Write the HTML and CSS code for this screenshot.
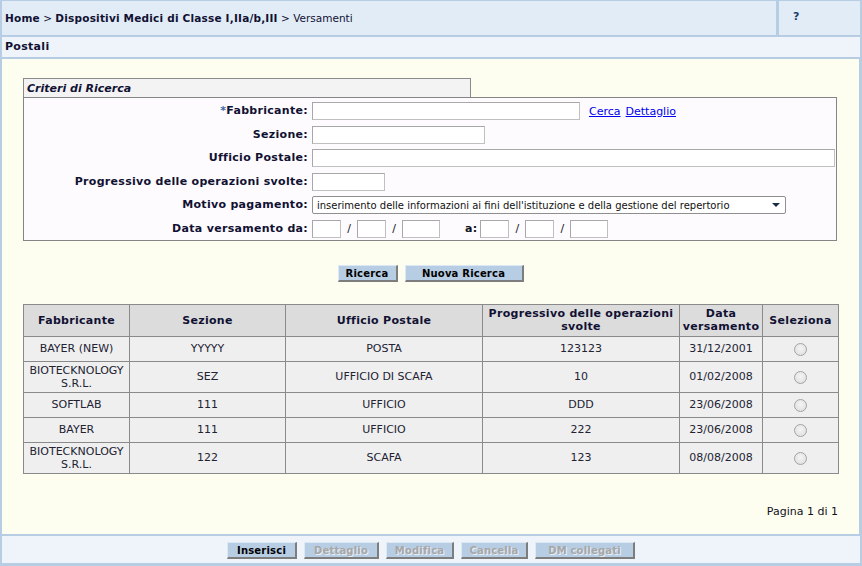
FILE: index.html
```html
<!DOCTYPE html>
<html lang="it">
<head>
<meta charset="utf-8">
<title>Versamenti Postali</title>
<link rel="stylesheet" href="styles.css">
</head>
<body>
<div class="page">
  <div class="topbar">
    <div class="crumbs"><b>Home</b> &gt; <b>Dispositivi Medici di Classe I,IIa/b,III</b> &gt; Versamenti</div>
    <div class="help">?</div>
  </div>
  <div class="titlebar">Postali</div>
  <div class="content">
    <div class="criteria">
      <div class="criteria-tab">Criteri di Ricerca</div>
      <div class="criteria-box">
        <div class="form">
          <label class="lbl"><span class="req">*</span>Fabbricante:</label>
          <div class="field"><span class="inp w-fab"></span><a href="#" class="lnk">Cerca</a><a href="#" class="lnk">Dettaglio</a></div>

          <label class="lbl">Sezione:</label>
          <div class="field"><span class="inp w-sez"></span></div>

          <label class="lbl">Ufficio Postale:</label>
          <div class="field"><span class="inp w-uff"></span></div>

          <label class="lbl">Progressivo delle operazioni svolte:</label>
          <div class="field"><span class="inp w-prog"></span></div>

          <label class="lbl">Motivo pagamento:</label>
          <div class="field"><div class="select"><span class="sel-text">inserimento delle informazioni ai fini dell'istituzione e della gestione del repertorio</span><span class="sel-arrow"></span></div></div>

          <label class="lbl">Data versamento da:</label>
          <div class="field">
            <span class="inp w-dd"></span><span class="slash">/</span><span class="inp w-mm"></span><span class="slash">/</span><span class="inp w-yy"></span>
            <span class="lbl-a">a:</span>
            <span class="inp w-dd"></span><span class="slash">/</span><span class="inp w-mm"></span><span class="slash">/</span><span class="inp w-yy"></span>
          </div>
        </div>
      </div>
    </div>

    <div class="actions">
      <span class="btn w-ric">Ricerca</span>
      <span class="btn w-nuova">Nuova Ricerca</span>
    </div>

    <table class="grid">
      <colgroup>
        <col class="c1"><col class="c2"><col class="c3"><col class="c4"><col class="c5"><col class="c6">
      </colgroup>
      <thead>
        <tr class="hrow"><th>Fabbricante</th><th>Sezione</th><th>Ufficio Postale</th><th>Progressivo delle operazioni svolte</th><th>Data versamento</th><th>Seleziona</th></tr>
      </thead>
      <tbody>
        <tr class="r1"><td>BAYER (NEW)</td><td>YYYYY</td><td>POSTA</td><td>123123</td><td>31/12/2001</td><td><span class="radio"></span></td></tr>
        <tr class="r2"><td>BIOTECKNOLOGY S.R.L.</td><td>SEZ</td><td>UFFICIO DI SCAFA</td><td>10</td><td>01/02/2008</td><td><span class="radio"></span></td></tr>
        <tr class="r1"><td>SOFTLAB</td><td>111</td><td>UFFICIO</td><td>DDD</td><td>23/06/2008</td><td><span class="radio"></span></td></tr>
        <tr class="r1"><td>BAYER</td><td>111</td><td>UFFICIO</td><td>222</td><td>23/06/2008</td><td><span class="radio"></span></td></tr>
        <tr class="r2"><td>BIOTECKNOLOGY S.R.L.</td><td>122</td><td>SCAFA</td><td>123</td><td>08/08/2008</td><td><span class="radio"></span></td></tr>
      </tbody>
    </table>

    <div class="pager">Pagina 1 di 1</div>
  </div>
  <div class="footer">
    <span class="btn w-ins">Inserisci</span>
    <span class="btn dis w-det">Dettaglio</span>
    <span class="btn dis w-mod">Modifica</span>
    <span class="btn dis w-can">Cancella</span>
    <span class="btn dis w-dm">DM collegati</span>
  </div>
</div>
</body>
</html>
```

FILE: styles.css
```css
html, body {
  margin: 0;
  padding: 0;
  background: #ffffff;
}
body {
  font-family: "DejaVu Sans", Verdana, sans-serif;
  font-size: 11px;
  color: #111122;
}
.page {
  width: 862px;
  height: 566px;
  box-sizing: border-box;
  border: 1px solid #b7cde3;
  border-left-width: 2px;
  border-right-width: 2px;
  border-bottom-width: 3px;
  display: flex;
  flex-direction: column;
}
.topbar {
  height: 34px;
  flex: none;
  display: flex;
  background: #e2ecf6;
  border-bottom: 2px solid #b7cde3;
}
.crumbs {
  flex: 1;
  padding-left: 3px;
  line-height: 34px;
  font-size: 10.5px;
  color: #111133;
}
.crumbs b {
  letter-spacing: 0.2px;
}
.help {
  width: 84px;
  border-left: 3px solid #b7cde3;
  font-weight: bold;
  color: #1c3c6c;
  padding-left: 14px;
  box-sizing: border-box;
  line-height: 32px;
  font-size: 11px;
}
.titlebar {
  height: 20px;
  flex: none;
  line-height: 20px;
  background: #eef4fa;
  border-bottom: 2px solid #b7cde3;
  padding-left: 3px;
  font-weight: bold;
  letter-spacing: 0.3px;
  color: #111133;
}
.content {
  flex: 1;
  background: #fefef0;
  padding: 19px 21px 0 21px;
  border-right: 1px solid #b7cde3;
  display: flex;
  flex-direction: column;
}
.criteria-tab {
  width: 443px;
  height: 18px;
  line-height: 19px;
  border: 1px solid #8a8a8a;
  border-bottom: 0;
  background: #f3f3f3;
  font-style: italic;
  font-weight: bold;
  padding-left: 3px;
  color: #111133;
}
.criteria-box {
  width: 812px;
  border: 1px solid #858585;
  background: #fdfbfd;
  padding: 4px 0 2px 0;
}
.form {
  display: grid;
  grid-template-columns: 284px 1fr;
  column-gap: 4px;
  row-gap: 5.6px;
  grid-auto-rows: 18px;
}
.lbl {
  text-align: right;
  font-weight: bold;
  letter-spacing: 0.3px;
  line-height: 18px;
  color: #111133;
}
.req {
  color: #3a6aa8;
}
.field {
  display: flex;
  align-items: center;
}
.inp {
  display: inline-block;
  height: 18px;
  box-sizing: border-box;
  border: 1px solid #a8a8a8;
  border-right-color: #c0c0c0;
  border-bottom-color: #c0c0c0;
  background: #ffffff;
}
.w-fab { width: 268px; }
.w-sez { width: 173px; }
.w-uff { width: 523px; }
.w-prog { width: 73px; }
.w-dd { width: 29px; }
.w-mm { width: 29px; }
.w-yy { width: 38px; }
.slash {
  width: 16px;
  text-align: center;
}
.lbl-a {
  font-weight: bold;
  margin-left: 25px;
  margin-right: 3px;
  letter-spacing: 0.3px;
}
.lnk {
  color: #0000ee;
  text-decoration: underline;
  margin-left: 5px;
}
.lnk:first-of-type {
  margin-left: 9px;
}
.select {
  width: 474px;
  height: 18px;
  box-sizing: border-box;
  border: 1px solid #8f8f8f;
  border-radius: 2px;
  background: #ffffff;
  display: flex;
  align-items: center;
}
.sel-text {
  font-size: 10px;
  padding-left: 4px;
  flex: 1;
  white-space: nowrap;
  color: #111;
}
.sel-arrow {
  width: 0;
  height: 0;
  border-left: 4px solid transparent;
  border-right: 4px solid transparent;
  border-top: 4px solid #1c2c4c;
  margin-right: 5px;
}
.actions {
  display: flex;
  justify-content: center;
  gap: 7px;
  margin-top: 24px;
}
.btn {
  display: inline-block;
  box-sizing: border-box;
  height: 17px;
  line-height: 15px;
  background: #b7cde3;
  border-top: 1px solid #dce8f4;
  border-left: 1px solid #dce8f4;
  border-right: 2px solid #7d7d7d;
  border-bottom: 2px solid #7d7d7d;
  font-size: 10px;
  font-weight: bold;
  letter-spacing: 0.2px;
  text-align: center;
  color: #000;
}
.btn.dis {
  color: #a7a7a7;
  text-shadow: 1px 1px 0 #e8eef6;
}
.w-ric { width: 60px; }
.w-nuova { width: 119px; }
.w-ins { width: 70px; }
.w-det { width: 75px; }
.w-mod { width: 68px; }
.w-can { width: 67px; }
.w-dm { width: 100px; }
.grid {
  margin-top: 22px;
  width: 815px;
  border-collapse: collapse;
  table-layout: fixed;
}
.c1 { width: 106px; }
.c2 { width: 156px; }
.c3 { width: 197px; }
.c4 { width: 197px; }
.c5 { width: 83px; }
.c6 { width: 76px; }
.grid th, .grid td {
  border: 1px solid #8a8a8a;
  text-align: center;
  padding: 0 1px;
  line-height: 13px;
}
.grid th {
  background: #dcdcdc;
  font-weight: bold;
  letter-spacing: 0.3px;
  height: 31px;
  color: #111133;
}
.grid td {
  background: #efefef;
  color: #222233;
}
.r1 td { height: 24px; }
.r2 td { height: 30px; }
.radio {
  display: inline-block;
  width: 11px;
  height: 11px;
  border-radius: 50%;
  border: 1px solid #a4a4a4;
  background: radial-gradient(circle at 50% 40%, #f4f4f4 0%, #dcdcdc 100%);
  vertical-align: middle;
}
.pager {
  margin-top: 31px;
  width: 815px;
  text-align: right;
  color: #111122;
}
.footer {
  height: 29px;
  flex: none;
  border-top: 2px solid #b7cde3;
  background: #eef4fa;
  display: flex;
  justify-content: center;
  align-items: flex-start;
  padding-top: 6px;
  gap: 7px;
  box-sizing: border-box;
}
```
